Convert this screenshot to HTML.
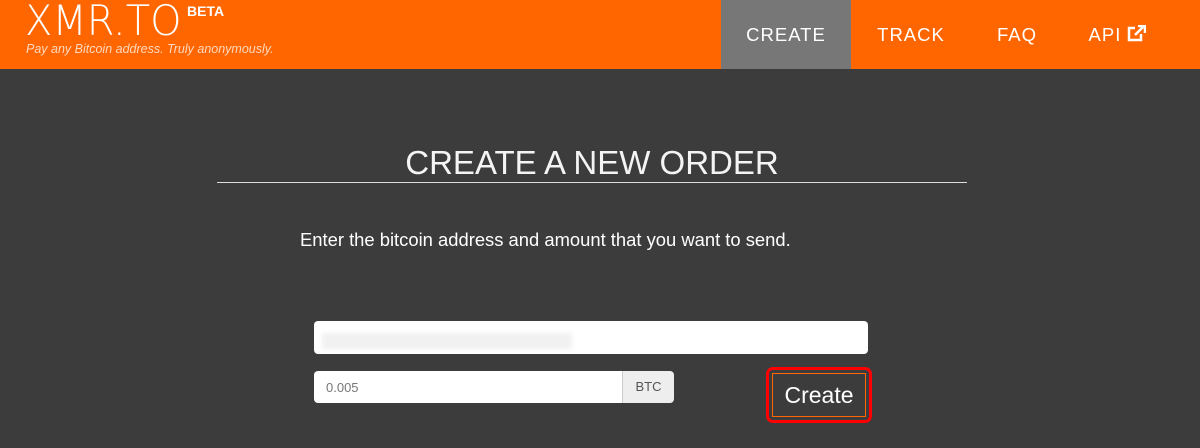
<!DOCTYPE html>
<html><head><style>
body{margin:0;width:1200px;height:448px;background:#3c3c3c;font-family:"Liberation Sans",sans-serif;overflow:hidden;position:relative}
.hdr{position:absolute;left:0;top:0;width:1200px;height:69px;background:#ff6600}
.logo{position:absolute;left:25px;top:-4px;color:#fff;font-size:42px;font-family:"DejaVu Sans",sans-serif;font-weight:200;transform:scaleX(0.95);transform-origin:left}
.beta{position:absolute;left:187px;top:3px;color:#fff;font-weight:bold;font-size:14px}
.tag{position:absolute;left:26px;top:42px;color:#ffd9bf;font-size:12.5px;font-style:italic}
.nav{position:absolute;top:0;height:69px;line-height:70px;color:#fff;font-size:18.5px;letter-spacing:1px;text-align:center}
h1{position:absolute;left:217px;width:750px;top:143px;margin:0;text-align:center;color:#f4f4f4;font-weight:normal;font-size:33px;letter-spacing:0px;border-bottom:1px solid #ddd;height:39px;line-height:40px}
p{position:absolute;left:300px;top:229px;margin:0;color:#fff;font-size:18.4px}
.in{position:absolute;background:#fff;border-radius:4px}
.btn{position:absolute;left:766px;top:367px;width:100px;height:50px;border:3px solid #f00;border-radius:7px}
.btn div{position:absolute;left:3px;top:3px;right:3px;bottom:3px;border:1px solid #ff6600;color:#fff;font-size:23px;text-align:center;line-height:42px}
</style></head><body>
<div class="hdr">
<div class="logo">XMR.TO</div><div class="beta">BETA</div>
<div class="tag">Pay any Bitcoin address. Truly anonymously.</div>
<div class="nav" style="left:721px;width:130px;background:#777">CREATE</div>
<div class="nav" style="left:862px;width:98px">TRACK</div>
<div class="nav" style="left:982px;width:70px">FAQ</div>
<div class="nav" style="left:1080px;width:75px">API <svg width="19" height="17" viewBox="0 0 19 17" style="vertical-align:-1px"><path d="M8 3H2v12h12V9" fill="none" stroke="#fff" stroke-width="2.5"/><path d="M8 10L16 2M11 1h7v7" fill="none" stroke="#fff" stroke-width="2.5"/></svg></div>
</div>
<h1>CREATE A NEW ORDER</h1>
<p>Enter the bitcoin address and amount that you want to send.</p>
<div class="in" style="left:314px;top:321px;width:554px;height:33px"><div style="position:absolute;left:8px;top:12px;width:250px;height:16px;background:#f1f1f1;filter:blur(2px)"></div></div>
<div class="in" style="left:314px;top:371px;width:359px;height:32px"><span style="position:absolute;left:12px;top:9px;font-size:13px;color:#777">0.005</span><div style="position:absolute;left:308px;top:0;width:51px;height:32px;background:#eee;border-left:1px solid #ccc;border-radius:0 4px 4px 0;text-align:center;line-height:32px;font-size:13px;color:#555">BTC</div></div>
<div class="btn"><div>Create</div></div>
</body></html>
